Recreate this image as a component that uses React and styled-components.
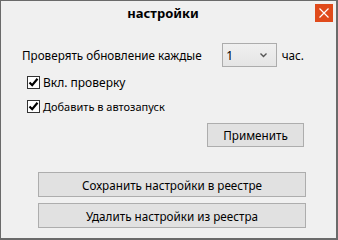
import React from 'react';
import styled, { createGlobalStyle } from 'styled-components';

const GlobalStyle = createGlobalStyle`
  html, body {
    margin: 0;
    padding: 0;
    background: #f0f0f0;
  }
  body {
    font-family: "Noto Sans", "DejaVu Sans", sans-serif;
  }
`;

// Window frame
const Window = styled.div`
  box-sizing: border-box;
  width: 338px;
  height: 240px;
  background: #f0f0f0;
  border: 1px solid #6a6a6a;
  border-right-width: 2px;
  border-bottom-width: 2px;
  display: flex;
  flex-direction: column;
`;

const TitleBar = styled.div`
  display: grid;
  grid-template-columns: 1fr auto;
  align-items: center;
  height: 26px;
  padding: 3px 3px 0 10px;
  box-sizing: border-box;
`;

const Title = styled.div`
  text-align: center;
  font-size: 13px;
  font-weight: bold;
  color: #000;
  margin-top: -6px;
`;

const CloseButton = styled.button`
  width: 18px;
  height: 18px;
  padding: 0;
  border: none;
  background: #e04a1b;
  display: flex;
  align-items: center;
  justify-content: center;
  align-self: start;
`;

const Body = styled.div`
  display: flex;
  flex-direction: column;
  padding: 16px 32px 0 21px;
`;

const IntervalRow = styled.div`
  display: flex;
  align-items: center;
  height: 24px;
  font-size: 11.7px;
  color: #000;
`;

const Label = styled.span`
  width: 203px;
`;

const Select = styled.div`
  box-sizing: border-box;
  width: 55px;
  height: 24px;
  border: 1px solid #acacac;
  background: linear-gradient(#f0f0f0, #e5e5e5);
  display: flex;
  align-items: center;
  justify-content: space-between;
  padding: 0 9px 0 3px;
  font-size: 12px;
`;

const Unit = styled.span`
  margin-left: 5px;
`;

const CheckRow = styled.label`
  display: flex;
  align-items: center;
  gap: 3px;
  margin-left: 5px;
  margin-top: ${(p) => p.$top}px;
  font-size: ${(p) => p.$size}px;
  color: #000;
  height: 13px;
`;

const Box = styled.span`
  box-sizing: border-box;
  width: 13px;
  height: 13px;
  border: 1px solid #333;
  background: #fff;
  display: flex;
  align-items: center;
  justify-content: center;
`;

const ApplyRow = styled.div`
  display: flex;
  justify-content: flex-end;
  margin-top: 10px;
`;

const Button = styled.button`
  box-sizing: border-box;
  width: ${(p) => p.$width}px;
  height: ${(p) => p.$height}px;
  border: 1px solid #adadad;
  background: #e1e1e1;
  font-family: "Noto Sans", "DejaVu Sans", sans-serif;
  font-size: 11.7px;
  color: #000;
  padding: 0;
`;

const RegistryGroup = styled.div`
  display: flex;
  flex-direction: column;
  gap: 6px;
  margin-top: 25px;
  padding-left: 16px;
`;

const Check = () => (
  <svg width="11" height="11" viewBox="0 0 11 11">
    <path d="M1.5 5.5 L4.2 8.2 L9.5 1.8" stroke="#000" strokeWidth="2.2" fill="none" />
  </svg>
);

export default function App() {
  return (
    <>
      <GlobalStyle />
      <Window>
        <TitleBar>
          <Title>настройки</Title>
          <CloseButton>
            <svg width="10" height="10" viewBox="0 0 10 10">
              <path d="M0.5 0.5 L9.5 9.5 M9.5 0.5 L0.5 9.5" stroke="#fff" strokeWidth="1.2" />
            </svg>
          </CloseButton>
        </TitleBar>
        <Body>
          <IntervalRow>
            <Label>Проверять обновление каждые</Label>
            <Select>
              <span>1</span>
              <svg width="7" height="5" viewBox="0 0 7 5">
                <path d="M0.5 0.5 L3.5 3.5 L6.5 0.5" stroke="#555" strokeWidth="1.4" fill="none" />
              </svg>
            </Select>
            <Unit>час.</Unit>
          </IntervalRow>
          <CheckRow $top={9} $size={12}>
            <Box><Check /></Box>
            Вкл. проверку
          </CheckRow>
          <CheckRow $top={11} $size={11}>
            <Box><Check /></Box>
            Добавить в автозапуск
          </CheckRow>
          <ApplyRow>
            <Button $width={97} $height={24}>Применить</Button>
          </ApplyRow>
          <RegistryGroup>
            <Button $width={268} $height={25}>Сохранить настройки в реестре</Button>
            <Button $width={268} $height={25}>Удалить настройки из реестра</Button>
          </RegistryGroup>
        </Body>
      </Window>
    </>
  );
}
